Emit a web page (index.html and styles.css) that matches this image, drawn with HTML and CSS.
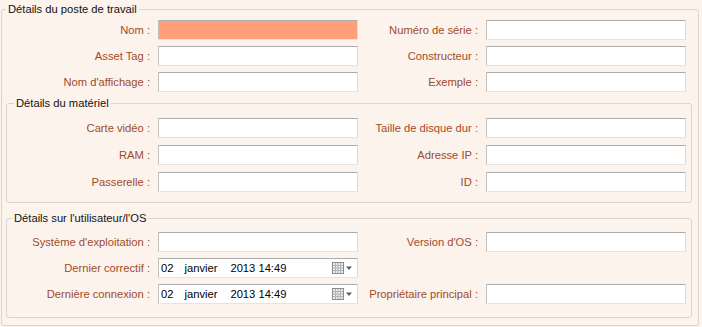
FILE: index.html
```html
<!DOCTYPE html>
<html lang="fr">
<head>
    <meta charset="UTF-8">
    <title>Détails du poste de travail</title>
    <link rel="stylesheet" href="styles.css">
</head>
<body>
    <fieldset class="group outer">
        <legend>Détails du poste de travail</legend>
        <div class="rows rows-top">
            <label class="lbl">Nom :</label>
            <input type="text" class="field field-hl">
            <label class="lbl">Numéro de série :</label>
            <input type="text" class="field">

            <label class="lbl">Asset Tag :</label>
            <input type="text" class="field">
            <label class="lbl">Constructeur :</label>
            <input type="text" class="field">

            <label class="lbl">Nom d'affichage :</label>
            <input type="text" class="field">
            <label class="lbl">Exemple :</label>
            <input type="text" class="field">
        </div>

        <fieldset class="group inner inner-hw">
            <legend>Détails du matériel</legend>
            <div class="rows rows-hw">
                <label class="lbl">Carte vidéo :</label>
                <input type="text" class="field">
                <label class="lbl">Taille de disque dur :</label>
                <input type="text" class="field">

                <label class="lbl">RAM :</label>
                <input type="text" class="field">
                <label class="lbl">Adresse IP :</label>
                <input type="text" class="field">

                <label class="lbl">Passerelle :</label>
                <input type="text" class="field">
                <label class="lbl">ID :</label>
                <input type="text" class="field">
            </div>
        </fieldset>

        <fieldset class="group inner inner-os">
            <legend>Détails sur l'utilisateur/l'OS</legend>
            <div class="rows rows-os">
                <label class="lbl">Système d'exploitation :</label>
                <input type="text" class="field">
                <label class="lbl">Version d'OS :</label>
                <input type="text" class="field">

                <label class="lbl">Dernier correctif :</label>
                <div class="field date">
                    <span class="d-day">02</span>
                    <span class="d-month">janvier</span>
                    <span class="d-year">2013 14:49</span>
                    <svg class="d-icon" width="20" height="12" viewBox="0 0 20 12">
                        <rect x="0.5" y="0.5" width="11" height="11" fill="#ececec" stroke="#8c8c8c"/>
                        <path d="M1 3.5h10M1 6h10M1 8.5h10M3.5 1v10M6 1v10M8.5 1v10" stroke="#b4b4b4" stroke-width="1"/>
                        <path d="M14 4.5h6l-3 3.5z" fill="#5a5f66"/>
                    </svg>
                </div>
                <span class="empty"></span>
                <span class="empty"></span>

                <label class="lbl">Dernière connexion :</label>
                <div class="field date">
                    <span class="d-day">02</span>
                    <span class="d-month">janvier</span>
                    <span class="d-year">2013 14:49</span>
                    <svg class="d-icon" width="20" height="12" viewBox="0 0 20 12">
                        <rect x="0.5" y="0.5" width="11" height="11" fill="#ececec" stroke="#8c8c8c"/>
                        <path d="M1 3.5h10M1 6h10M1 8.5h10M3.5 1v10M6 1v10M8.5 1v10" stroke="#b4b4b4" stroke-width="1"/>
                        <path d="M14 4.5h6l-3 3.5z" fill="#5a5f66"/>
                    </svg>
                </div>
                <label class="lbl">Propriétaire principal :</label>
                <input type="text" class="field">
            </div>
        </fieldset>
    </fieldset>
</body>
</html>
```

FILE: styles.css
```css
* {
    box-sizing: border-box;
}
body {
    margin: 0;
    padding-top: 2px;
    background: #fdf3ed;
    font-family: "Liberation Sans", Arial, sans-serif;
    font-size: 11.2px;
    color: #000;
}
.group {
    margin: 0;
    border: 1px solid #d9d4d0;
    border-radius: 3px;
    min-inline-size: 0;
}
.group legend {
    padding: 0 2px;
    line-height: 15px;
    color: #111;
}
.outer {
    margin-left: 1px;
    width: 698px;
    padding: 3px 6px 7px 4px;
}
.inner {
    padding: 0;
}
.inner-hw {
    margin-top: 4px;
    padding: 7px 0 10px 0;
}
.inner-hw legend { margin-left: 7px; }
.inner-os {
    margin-top: 8px;
    padding: 6px 0 13px 0;
}
.inner-os legend { margin-left: 5px; }

.rows {
    --lw: 143px;
    display: grid;
    grid-template-columns: var(--lw) 200px 112px 200px;
    grid-auto-rows: 20px;
    column-gap: 8px;
    row-gap: 6px;
    align-items: center;
}
.rows-top { --lw: 144px; }
.rows-hw { row-gap: 7px; }

.lbl {
    text-align: right;
    color: #9d4c29;
    white-space: nowrap;
}
.field {
    height: 20px;
    width: 200px;
    margin: 0;
    padding: 0 2px;
    background: #fff;
    border: 1px solid;
    border-color: #acacac #dcdcdc #e4e4e4 #c0c0c0;
    border-radius: 1px;
    font: inherit;
    outline: none;
}
.field-hl {
    background: #ffa07a;
}
.date {
    display: flex;
    align-items: center;
    padding-left: 2px;
}
.d-month { margin-left: 11px; }
.d-year { margin-left: 13px; }
.d-icon {
    margin-left: auto;
    margin-right: 3px;
}
```
